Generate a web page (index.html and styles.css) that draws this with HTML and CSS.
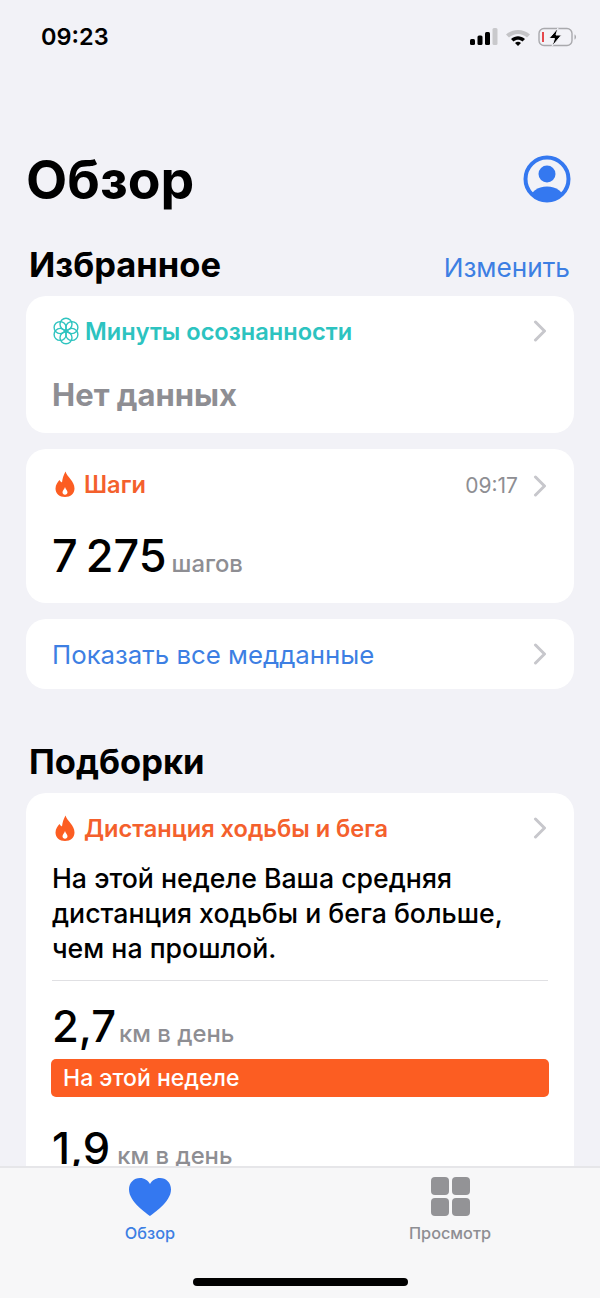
FILE: index.html

```html
<!DOCTYPE html>
<html lang="ru">
<head>
    <meta charset="UTF-8">
    <meta name="viewport" content="width=device-width, initial-scale=1.0">
    <title>Обзор</title>
    <link rel="stylesheet" href="styles.css">
</head>
<body>
    <div class="screen">
        <div class="status-bar">
            <span class="clock">09:23</span>
            <div class="status-icons">
                <svg width="28" height="18" viewBox="0 0 28 18">
                    <rect x="0" y="11" width="5" height="6" rx="1.5" fill="#000"/>
                    <rect x="7.5" y="7.5" width="5" height="9.5" rx="1.5" fill="#000"/>
                    <rect x="15" y="4" width="5" height="13" rx="1.5" fill="#000"/>
                    <rect x="22.5" y="0" width="5" height="17" rx="1.5" fill="#c9c9cc"/>
                </svg>
                <svg width="24" height="18" viewBox="0 0 24 18">
                    <path d="M0 6.5C6.5 .5 17.5 .5 24 6.5L21 9.5C16 4.8 8 4.8 3 9.5Z" fill="#c4c4c7"/>
                    <path d="M5 11C9.5 7.2 14.5 7.2 19 11L16.5 13.5C13.5 11 10.5 11 7.5 13.5Z" fill="#000"/>
                    <path d="M9 15C11 13.3 13 13.3 15 15L12 18Z" fill="#000"/>
                </svg>
                <svg width="40" height="20" viewBox="0 0 40 20">
                    <rect x="1" y="1.5" width="33" height="17" rx="5" fill="none" stroke="#a9a9ad" stroke-width="1.4"/>
                    <rect x="4" y="5" width="2" height="10" fill="#e5484d"/>
                    <path d="M36.5 7.5C38.5 8 38.5 12 36.5 12.5Z" fill="#a9a9ad"/>
                    <path d="M20 1L11 11.5H16.5L14 19.5L23.5 8H18Z" fill="#000" stroke="#f2f2f7" stroke-width="1"/>
                </svg>
            </div>
        </div>

        <header class="page-head">
            <h1>Обзор</h1>
            <svg class="avatar" width="48" height="48" viewBox="0 0 48 48">
                <defs>
                    <clipPath id="avatarClip"><circle cx="24" cy="24" r="22"/></clipPath>
                </defs>
                <circle cx="24" cy="24" r="21.5" fill="none" stroke="#3478f0" stroke-width="4"/>
                <circle cx="24" cy="19" r="8.5" fill="#3478f0"/>
                <ellipse cx="24" cy="44" rx="17" ry="12.5" fill="#3478f0" clip-path="url(#avatarClip)"/>
            </svg>
        </header>

        <div class="section-head">
            <h2>Избранное</h2>
            <a class="edit-link">Изменить</a>
        </div>

        <section class="card card-mind">
            <div class="card-top">
                <svg class="card-icon" width="28" height="28" viewBox="0 0 28 28" fill="none" stroke="#2fc4c0" stroke-width="1.4">
                    <circle cx="14" cy="7.2" r="6"/>
                    <circle cx="19.89" cy="10.6" r="6"/>
                    <circle cx="19.89" cy="17.4" r="6"/>
                    <circle cx="14" cy="20.8" r="6"/>
                    <circle cx="8.11" cy="17.4" r="6"/>
                    <circle cx="8.11" cy="10.6" r="6"/>
                </svg>
                <span class="card-title teal">Минуты осознанности</span>
                <svg class="chevron" width="14" height="22" viewBox="0 0 14 22"><path d="M2.5 2L11.5 11L2.5 20"/></svg>
            </div>
            <div class="no-data">Нет данных</div>
        </section>

        <section class="card card-steps">
            <div class="card-top">
                <svg class="card-icon flame-icon" width="24" height="28" viewBox="0 0 24 28"><path class="flame" fill-rule="evenodd" d="M12.5 1.5C14 7 21.5 11 21.5 18.5C21.5 23.5 17.5 27 12 27C6.5 27 2.5 23.5 2.5 18.5C2.5 14.5 5 12 6.5 10C7.5 11.5 8 12 9 12.5C9.5 8.5 10.5 5 12.5 1.5ZM12 17C11.5 19 9.5 20.5 9.5 22.3C9.5 23.8 10.6 24.8 12 24.8C13.4 24.8 14.5 23.8 14.5 22.3C14.5 20.5 12.5 19 12 17Z"/></svg>
                <span class="card-title orange">Шаги</span>
                <span class="card-time">09:17</span>
                <svg class="chevron" width="14" height="22" viewBox="0 0 14 22"><path d="M2.5 2L11.5 11L2.5 20"/></svg>
            </div>
            <div class="metric steps-metric"><span class="num">7 275</span><span class="unit">шагов</span></div>
        </section>

        <section class="card card-all">
            <span class="all-link">Показать все медданные</span>
            <svg class="chevron" width="14" height="22" viewBox="0 0 14 22"><path d="M2.5 2L11.5 11L2.5 20"/></svg>
        </section>

        <div class="section-head section-picks">
            <h2>Подборки</h2>
        </div>

        <section class="card card-pick">
            <div class="card-top">
                <svg class="card-icon flame-icon" width="24" height="28" viewBox="0 0 24 28"><path class="flame" fill-rule="evenodd" d="M12.5 1.5C14 7 21.5 11 21.5 18.5C21.5 23.5 17.5 27 12 27C6.5 27 2.5 23.5 2.5 18.5C2.5 14.5 5 12 6.5 10C7.5 11.5 8 12 9 12.5C9.5 8.5 10.5 5 12.5 1.5ZM12 17C11.5 19 9.5 20.5 9.5 22.3C9.5 23.8 10.6 24.8 12 24.8C13.4 24.8 14.5 23.8 14.5 22.3C14.5 20.5 12.5 19 12 17Z"/></svg>
                <span class="card-title orange">Дистанция ходьбы и бега</span>
                <svg class="chevron" width="14" height="22" viewBox="0 0 14 22"><path d="M2.5 2L11.5 11L2.5 20"/></svg>
            </div>
            <p class="pick-text">На этой неделе Ваша средняя дистанция ходьбы и бега больше, чем на прошлой.</p>
            <div class="divider"></div>
            <div class="metric"><span class="num">2,7</span><span class="unit">км в день</span></div>
            <div class="week-bar">На этой неделе</div>
            <div class="metric metric-prev"><span class="num">1,9</span><span class="unit">км в день</span></div>
        </section>

        <nav class="tab-bar">
            <div class="tab tab-active">
                <svg width="44" height="40" viewBox="0 0 44 40"><path d="M22 39C19 36.5 1 25 1 12.5C1 5.5 6 1 12 1C16.5 1 20 3.5 22 7C24 3.5 27.5 1 32 1C38 1 43 5.5 43 12.5C43 25 25 36.5 22 39Z" fill="#3478f0"/></svg>
                <span>Обзор</span>
            </div>
            <div class="tab">
                <div class="grid-icon"><i></i><i></i><i></i><i></i></div>
                <span>Просмотр</span>
            </div>
            <div class="home-bar"></div>
        </nav>
    </div>
</body>
</html>
```

FILE: styles.css

```css
* {
    box-sizing: border-box;
}
body {
    margin: 0;
    font-family: Inter, "Noto Sans", sans-serif;
    background-color: #f2f2f7;
    color: #000;
}
.screen {
    position: relative;
    width: 600px;
    height: 1298px;
    overflow: hidden;
    padding: 0 26px;
}
.status-bar {
    height: 72px;
    padding: 21px 0 0 15px;
    display: flex;
    justify-content: space-between;
    align-items: flex-start;
}
.clock {
    font-size: 23.5px;
    font-weight: 600;
    line-height: 32px;
}
.status-icons {
    display: flex;
    align-items: center;
    gap: 8px;
    height: 32px;
    margin-right: -4px;
}
.page-head {
    height: 144px;
    padding-top: 72px;
    display: flex;
    justify-content: space-between;
    align-items: flex-start;
}
h1 {
    margin: 0;
    font-size: 53.5px;
    font-weight: 700;
    line-height: 72px;
}
.avatar {
    margin: 11px 3px 0 0;
}
.section-head {
    height: 80px;
    padding: 28px 4px 0 3px;
    display: flex;
    justify-content: space-between;
    align-items: flex-start;
}
h2 {
    margin: 0;
    font-size: 34.5px;
    font-weight: 700;
    line-height: 42px;
}
.edit-link {
    font-size: 26.2px;
    line-height: 44px;
    margin-top: 2px;
    color: #3d7fe3;
}
.card {
    background-color: #fff;
    border-radius: 20px;
    padding: 17px 26px;
    margin-bottom: 16px;
}
.card-top {
    display: flex;
    align-items: center;
    height: 36px;
}
.card-icon {
    flex: none;
    margin-right: 5px;
}
.flame-icon {
    margin: 0 7px 0 1px;
}
.flame {
    fill: #fc5d22;
}
.card-title {
    font-size: 23.6px;
    font-weight: 600;
    flex: 1;
}
.teal {
    color: #2cc3c0;
}
.orange {
    color: #f4602c;
}
.card-time {
    font-size: 21px;
    color: #8e8e93;
    margin: 3px 15px 0 0;
}
.chevron {
    flex: none;
    margin: -1px 1px 0 0;
}
.card-steps .chevron {
    margin-top: 3px;
}
.chevron path {
    fill: none;
    stroke: #c7c7cc;
    stroke-width: 3;
    stroke-linecap: round;
    stroke-linejoin: round;
}
.card-mind {
    height: 137px;
}
.no-data {
    margin-top: 24px;
    font-size: 31px;
    font-weight: 700;
    line-height: 44px;
    color: #8e8e93;
}
.card-steps {
    height: 154px;
}
.metric {
    display: flex;
    align-items: baseline;
    gap: 5px;
}
.steps-metric {
    margin-top: 24px;
}
.num {
    font-size: 43.5px;
    font-weight: 500;
    line-height: 60px;
}
.steps-metric .num {
    font-size: 45px;
    word-spacing: -4px;
}
.unit {
    font-size: 23.8px;
    font-weight: 500;
    color: #8e8e93;
}
.card-all {
    height: 70px;
    padding: 0 26px;
    display: flex;
    align-items: center;
    justify-content: space-between;
}
.all-link {
    font-size: 25.8px;
    color: #3d7fe3;
}
.section-picks {
    margin-top: 30px;
    padding-top: 22px;
    height: 74px;
}
.card-pick {
    height: 500px;
}
.pick-text {
    margin: 15px 0 0;
    font-size: 26.7px;
    font-weight: 500;
    line-height: 35px;
}
.divider {
    height: 1px;
    margin-top: 14px;
    background-color: #e0e0e3;
}
.card-pick .metric {
    margin-top: 15px;
    gap: 3px;
}
.week-bar {
    height: 38px;
    margin: 3px -1px 0;
    padding-left: 12px;
    border-radius: 5px;
    background-color: #fc5d22;
    color: #fff;
    font-size: 23px;
    font-weight: 500;
    line-height: 39px;
}
.card-pick .metric-prev {
    margin-top: 21px;
    gap: 7px;
}
.tab-bar {
    position: absolute;
    left: 0;
    right: 0;
    bottom: 0;
    height: 132px;
    border-top: 2px solid #e6e6e9;
    background-color: #f7f7f8;
    display: flex;
}
.tab {
    width: 50%;
    padding-top: 9px;
    display: flex;
    flex-direction: column;
    align-items: center;
    font-size: 16.3px;
    color: #8e8e93;
}
.tab span {
    margin-top: 5px;
    line-height: 22px;
    font-weight: 500;
}
.tab-active {
    color: #3d7fe3;
}
.grid-icon {
    display: grid;
    grid-template-columns: 18px 18px;
    grid-auto-rows: 18px;
    gap: 3px;
    height: 40px;
}
.grid-icon i {
    background-color: #939396;
    border-radius: 4px;
}
.home-bar {
    position: absolute;
    left: 193px;
    bottom: 12px;
    width: 215px;
    height: 8px;
    border-radius: 4px;
    background-color: #000;
}
```
